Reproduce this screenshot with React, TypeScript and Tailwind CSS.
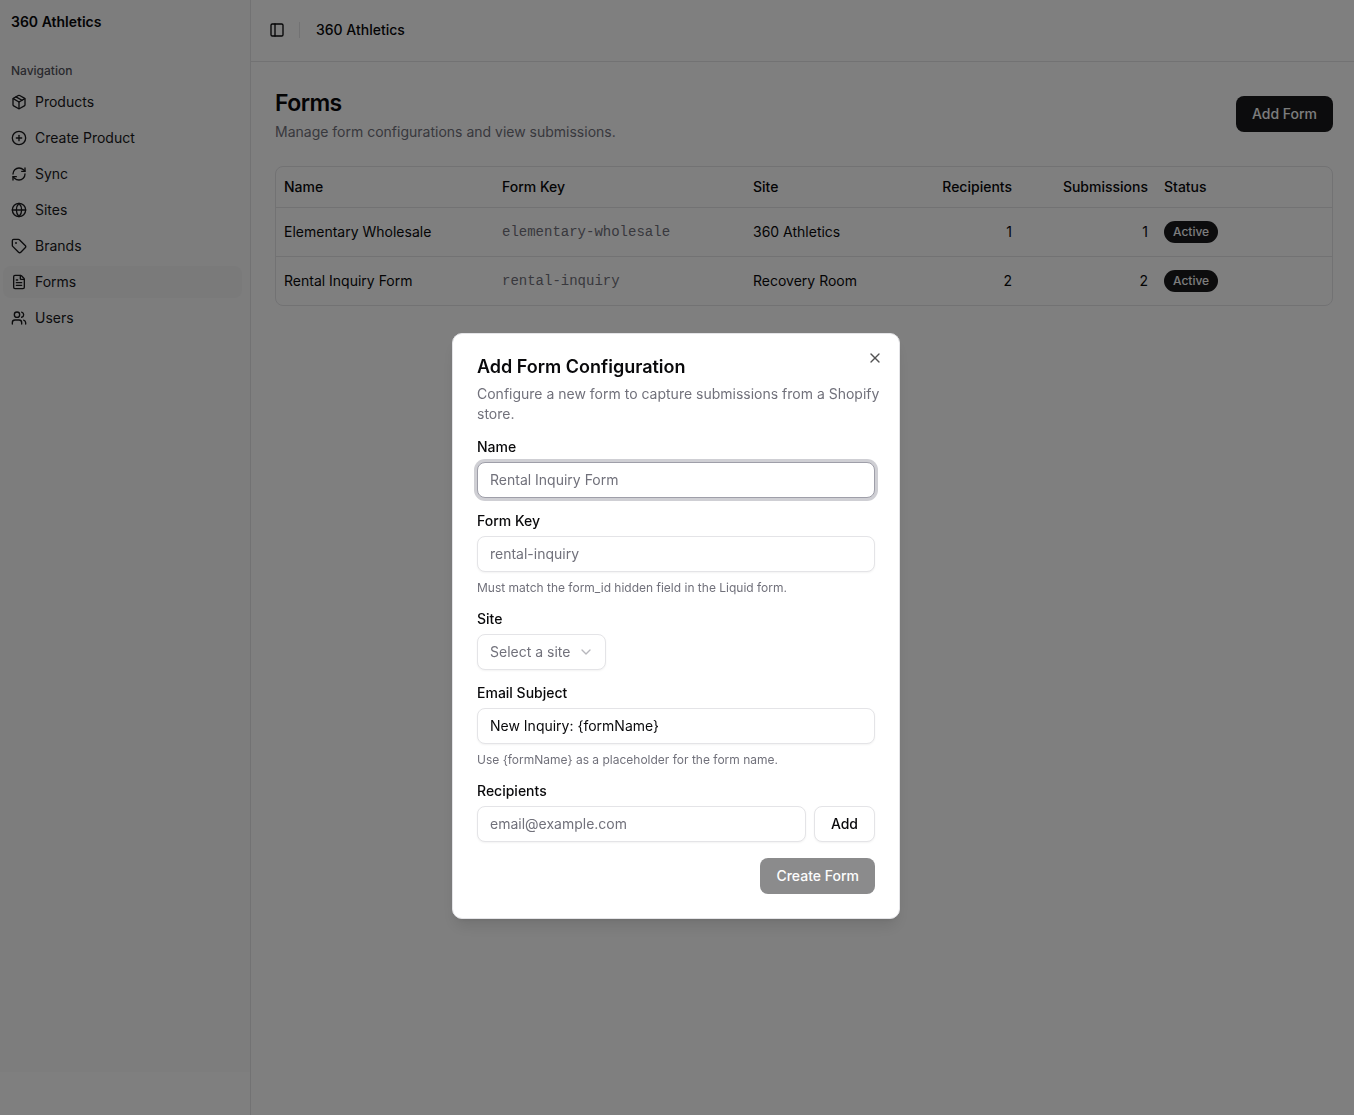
import { useState } from 'react';
import type { ReactNode } from 'react';
import {
  ChevronDown,
  CirclePlus,
  FileText,
  Globe,
  Package,
  PanelLeft,
  RefreshCw,
  Tag,
  Users,
  X,
} from 'lucide-react';

const menuItems = [
  { href: '#products', label: 'Products', icon: Package },
  { href: '#create-product', label: 'Create Product', icon: CirclePlus },
  { href: '#sync', label: 'Sync', icon: RefreshCw },
  { href: '#sites', label: 'Sites', icon: Globe },
  { href: '#brands', label: 'Brands', icon: Tag },
  { href: '#forms', label: 'Forms', icon: FileText },
  { href: '#users', label: 'Users', icon: Users },
];

const forms = [
  { name: 'Elementary Wholesale', key: 'elementary-wholesale', site: '360 Athletics', recipients: 1, submissions: 1 },
  { name: 'Rental Inquiry Form', key: 'rental-inquiry', site: 'Recovery Room', recipients: 2, submissions: 2 },
];

const inputClass =
  'h-9 w-full min-w-0 rounded-lg border bg-white px-3 pb-0.5 text-sm text-zinc-950 outline-none placeholder:text-zinc-500';

function Sidebar() {
  const pathname = '#forms';

  return (
    <aside className="flex w-[251px] shrink-0 flex-col border-r border-zinc-200 pb-[43px]">
      <div className="flex-1 bg-[#fafafa] pr-2 pl-[3px]">
        <div className="px-2 pt-3 text-sm font-semibold">360 Athletics</div>
        <div className="mt-[22px] flex h-8 items-center px-2 pt-px text-xs font-medium text-zinc-600">
          Navigation
        </div>
        <nav>
          <ul className="space-y-1">
            {menuItems.map((item) => {
              const Icon = item.icon;
              const isActive = pathname === item.href;
              return (
                <li key={item.href}>
                  <a
                    href={item.href}
                    className={`flex h-8 items-center gap-2 rounded-lg px-2 text-sm text-zinc-900 ${
                      isActive ? 'bg-zinc-100' : ''
                    }`}
                  >
                    <Icon className="size-4" />
                    <span>{item.label}</span>
                  </a>
                </li>
              );
            })}
          </ul>
        </nav>
      </div>
    </aside>
  );
}

function FormsTable() {
  return (
    <div className="mt-6 overflow-hidden rounded-lg border border-zinc-200">
      <table className="w-full table-fixed text-sm">
        <colgroup>
          <col className="w-[218px]" />
          <col className="w-[251px]" />
          <col className="w-[139px]" />
          <col className="w-[136px]" />
          <col className="w-[136px]" />
          <col />
        </colgroup>
        <thead>
          <tr className="h-10 border-b border-zinc-200 text-left">
            <th className="px-2 font-medium">Name</th>
            <th className="px-2 font-medium">Form Key</th>
            <th className="px-2 font-medium">Site</th>
            <th className="px-2 text-right font-medium">Recipients</th>
            <th className="px-2 text-right font-medium">Submissions</th>
            <th className="px-2 font-medium">Status</th>
          </tr>
        </thead>
        <tbody>
          {forms.map((form) => (
            <tr key={form.key} className="h-[49px] border-b border-zinc-200 last:border-0">
              <td className="px-2">{form.name}</td>
              <td className="px-2 font-['Liberation_Mono',monospace] text-zinc-500">{form.key}</td>
              <td className="px-2">{form.site}</td>
              <td className="px-2 text-right">{form.recipients}</td>
              <td className="px-2 text-right">{form.submissions}</td>
              <td className="px-2">
                <span className="inline-flex h-[22px] items-center rounded-full bg-zinc-900 px-[9px] align-middle text-xs font-medium text-zinc-50">
                  Active
                </span>
              </td>
            </tr>
          ))}
        </tbody>
      </table>
    </div>
  );
}

interface FieldProps {
  id: string;
  label: string;
  hint?: string;
  children: ReactNode;
}

function Field({ id, label, hint, children }: FieldProps) {
  return (
    <div className="flex flex-col gap-2">
      <label htmlFor={id} className="text-sm leading-[14px] font-medium">
        {label}
      </label>
      {children}
      {hint && <p className="text-xs text-zinc-500">{hint}</p>}
    </div>
  );
}

function AddFormDialog({ onClose }: { onClose: () => void }) {
  const [subject, setSubject] = useState('New Inquiry: {formName}');

  return (
    <div className="fixed inset-0 z-50 flex items-center justify-center bg-black/50 pt-[137px] pr-0.5">
      <div
        role="dialog"
        aria-modal="true"
        aria-labelledby="dialog-title"
        className="relative w-full max-w-md rounded-[10px] border border-zinc-200 bg-white p-6 shadow-lg"
      >
        <h2 id="dialog-title" className="text-lg leading-[18px] font-semibold">
          Add Form Configuration
        </h2>
        <p className="mt-2 -mr-2 text-sm text-zinc-500">
          Configure a new form to capture submissions from a Shopify store.
        </p>
        <form className="mt-4 flex flex-col gap-4" onSubmit={(e) => e.preventDefault()}>
          <Field id="name" label="Name">
            <input
              id="name"
              placeholder="Rental Inquiry Form"
              className={`${inputClass} border-zinc-400 ring-3 ring-zinc-400/50`}
            />
          </Field>
          <Field id="form-key" label="Form Key" hint="Must match the form_id hidden field in the Liquid form.">
            <input
              id="form-key"
              placeholder="rental-inquiry"
              className={`${inputClass} border-zinc-200 shadow-xs`}
            />
          </Field>
          <Field id="site" label="Site">
            <div className="relative w-[129px]">
              <select
                id="site"
                defaultValue=""
                className="h-9 w-full appearance-none rounded-lg border border-zinc-200 bg-white pl-3 text-sm text-zinc-500 shadow-xs outline-none"
              >
                <option value="">Select a site</option>
                <option value="360">360 Athletics</option>
                <option value="recovery">Recovery Room</option>
              </select>
              <ChevronDown className="pointer-events-none absolute top-2.5 right-3 size-4 text-zinc-500 opacity-50" />
            </div>
          </Field>
          <Field
            id="subject"
            label="Email Subject"
            hint="Use {formName} as a placeholder for the form name."
          >
            <input
              id="subject"
              value={subject}
              onChange={(e) => setSubject(e.target.value)}
              className={`${inputClass} border-zinc-200 shadow-xs`}
            />
          </Field>
          <Field id="recipients" label="Recipients">
            <div className="flex gap-2">
              <input
                id="recipients"
                type="email"
                placeholder="email@example.com"
                className={`${inputClass} border-zinc-200 shadow-xs`}
              />
              <button
                type="button"
                className="h-9 rounded-lg border border-zinc-200 bg-white px-4 text-sm font-medium shadow-xs"
              >
                Add
              </button>
            </div>
          </Field>
          <div className="flex justify-end">
            <button
              type="submit"
              disabled
              className="h-9 rounded-lg bg-zinc-900 px-4 text-sm font-medium text-zinc-50 disabled:opacity-50"
            >
              Create Form
            </button>
          </div>
        </form>
        <button
          type="button"
          aria-label="Close"
          onClick={onClose}
          className="absolute top-4 right-4 opacity-70"
        >
          <X className="size-4" />
        </button>
      </div>
    </div>
  );
}

export default function App() {
  const [isOpen, setIsOpen] = useState(true);

  return (
    <div className="flex min-h-screen bg-white font-['Inter','Liberation_Sans',sans-serif] text-zinc-950">
      <Sidebar />

      <div className="min-w-0 flex-1">
        <header className="flex h-[62px] items-center border-b border-zinc-200 px-3 pb-px">
          <button
            type="button"
            aria-label="Toggle sidebar"
            className="flex size-7 items-center justify-center"
          >
            <PanelLeft className="size-4" />
          </button>
          <div className="mr-4 ml-2 h-4 w-px bg-zinc-200" />
          <span className="text-sm font-medium">360 Athletics</span>
        </header>

        <main className="py-6 pr-[21px] pl-6">
          <div className="flex items-center justify-between">
            <div>
              <h1 className="pt-px text-[23px] leading-8 font-semibold tracking-tight">Forms</h1>
              <p className="mt-[3px] text-sm text-zinc-500">
                Manage form configurations and view submissions.
              </p>
            </div>
            <button
              type="button"
              onClick={() => setIsOpen(true)}
              className="h-9 rounded-lg bg-zinc-900 px-4 text-sm font-medium text-zinc-50"
            >
              Add Form
            </button>
          </div>
          <FormsTable />
        </main>
      </div>

      {isOpen && <AddFormDialog onClose={() => setIsOpen(false)} />}
    </div>
  );
}
